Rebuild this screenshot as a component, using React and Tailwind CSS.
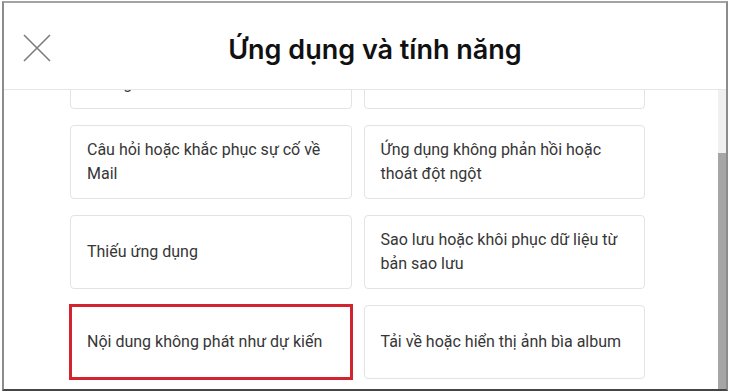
import React from "react";

const Card = ({ children, red }) => (
  <div
    className={
      "h-[74px] rounded-[4px] border border-[#e3e3e3] bg-white px-[16px] flex items-center text-[16px] leading-[24px] text-[#363636] whitespace-nowrap overflow-hidden " +
      (red ? "outline-[3px] outline-solid outline-[#d2232e] outline-offset-[-2px] rounded-none" : "")
    }
    style={{ fontFamily: "Roboto, 'Noto Sans', sans-serif" }}
  >
    <div>{children}</div>
  </div>
);

export default function App() {
  return (
    <div
      className="w-[730px] h-[392px] bg-white overflow-hidden"
      style={{ fontFamily: "Inter, 'Noto Sans', sans-serif" }}
    >
      <div className="mt-[1px] ml-[2px] w-[726px] h-[390px] border-t-2 border-x-2 border-b-2 border-t-[#a3a3a3] border-x-[#8c8c8c] border-b-[#454545] flex flex-col overflow-hidden">
        <div className="h-[87px] shrink-0 border-b border-[#e6e6e6] flex items-center pt-[8px] bg-white">
          <div className="w-[70px] pl-[19px] flex items-center mb-[4px]">
            <svg width="28" height="28" viewBox="0 0 28 28">
              <path d="M1 1 L27 27 M27 1 L1 27" stroke="#7d7d7d" strokeWidth="1.6" fill="none" />
            </svg>
          </div>
          <div className="flex-1 text-center text-[27px] leading-[34px] font-semibold text-[#111111] whitespace-nowrap">
            Ứng dụng và tính năng
          </div>
          <div className="w-[50px]" />
        </div>
        <div className="flex flex-1 min-h-0">
          <div className="flex-1 overflow-hidden pl-[66px] pr-[73px]">
            <div className="grid grid-cols-2 gap-x-[12px] gap-y-[16px] mt-[-55px]">
              <Card>
                Sự cố với tùy chọn<br />Thông báo
              </Card>
              <Card>Cập nhật ứng dụng</Card>
              <Card>
                Câu hỏi hoặc khắc phục sự cố về<br />Mail
              </Card>
              <Card>
                Ứng dụng không phản hồi hoặc<br />thoát đột ngột
              </Card>
              <Card>Thiếu ứng dụng</Card>
              <Card>
                Sao lưu hoặc khôi phục dữ liệu từ<br />bản sao lưu
              </Card>
              <Card red>Nội dung không phát như dự kiến</Card>
              <Card>Tải về hoặc hiển thị ảnh bìa album</Card>
            </div>
          </div>
          <div className="w-[8px] shrink-0 bg-[#f0f0f0] flex flex-col">
            <div className="h-[63px]" />
            <div className="flex-1 bg-[#a6a6a6]" />
          </div>
        </div>
      </div>
    </div>
  );
}
